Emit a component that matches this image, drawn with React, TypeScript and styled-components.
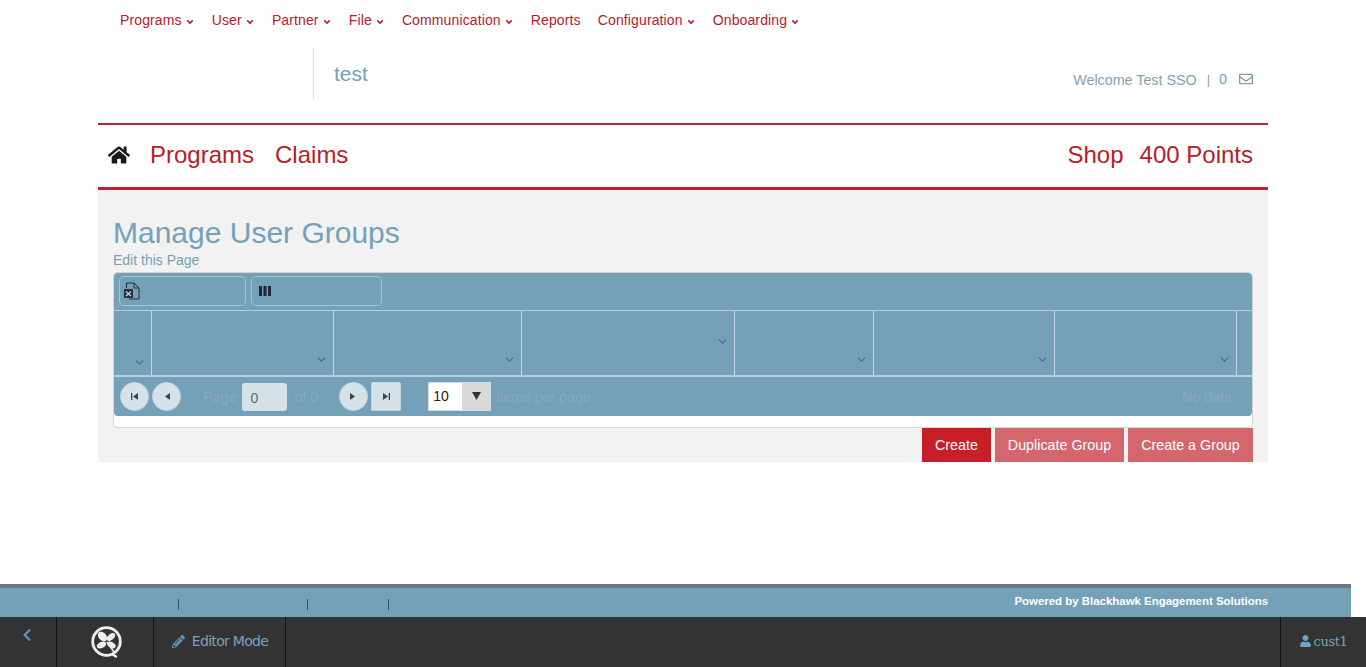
import styled, { createGlobalStyle } from "styled-components";
import { ChevronDown } from "lucide-react";
import {
  FaAngleDown,
  FaChevronLeft,
  FaHome,
  FaPencilAlt,
  FaRegEnvelope,
  FaUser,
} from "react-icons/fa";

const GlobalStyle = createGlobalStyle`
  * {
    box-sizing: border-box;
  }
  html, body {
    margin: 0;
    padding: 0;
    background: #fff;
    font-family: "Liberation Sans", Arial, sans-serif;
  }
`;

const Page = styled.div`
  min-height: 667px;
  height: 667px;
  overflow: hidden;
  display: flex;
  flex-direction: column;
`;

const Container = styled.div`
  width: 1170px;
  margin-left: 98px;
`;

const TopNav = styled.nav`
  height: 40px;
  padding-left: 22px;
  display: flex;
  align-items: center;
  gap: 17.100px;
`;

const TopLink = styled.a`
  display: inline-flex;
  align-items: center;
  gap: 3px;
  font-size: 14px;
  letter-spacing: 0.12px;
  color: #b5202b;
  svg {
    width: 10px;
    height: 10px;
    margin-top: 3px;
  }
`;

const Header = styled.header`
  height: 85px;
  padding-top: 8px;
  display: flex;
  align-items: flex-start;
  justify-content: space-between;
  border-bottom: 2px solid #b52431;
`;

const Brand = styled.div`
  margin-left: 215px;
  width: 300px;
  height: 51px;
  padding: 14px 0 0 20px;
  border-left: 1px solid #dcdcdc;
  font-size: 21px;
  line-height: 24px;
  color: #75a1b8;
`;

const Welcome = styled.div`
  margin-top: 23px;
  padding-right: 15px;
  display: flex;
  align-items: center;
  font-size: 14.300px;
  line-height: 18px;
  color: #839fb6;
`;

const Pipe = styled.span`
  margin: 0 9px 0 10px;
  font-size: 13px;
`;

const Count = styled.span`
  color: #6d9fc0;
  margin-right: 12px;
  position: relative;
  top: -1px;
`;

const EnvelopeIcon = styled(FaRegEnvelope)`
  width: 14px;
  height: 14px;
  color: #7f9cae;
  position: relative;
  top: -1px;
`;

const MainNav = styled.nav`
  height: 65px;
  padding: 0 15px 2px 10px;
  display: flex;
  align-items: center;
  justify-content: space-between;
  border-bottom: 3px solid #c1202c;
`;

const NavGroup = styled.div`
  display: flex;
  align-items: center;
  gap: 21px;
`;

const HomeIcon = styled(FaHome)`
  width: 22px;
  height: 22px;
  color: #1c1c1c;
  margin-right: -1px;
`;

const NavLink = styled.a`
  font-size: 24px;
  line-height: 28px;
  color: #b5202b;
`;

const ShopGroup = styled(NavGroup)`
  gap: 16px;
`;

const Panel = styled.section`
  height: 272px;
  padding: 25px 15px 0;
  background: #f2f2f2;
`;

const Title = styled.h1`
  margin: 0;
  font-size: 30px;
  font-weight: normal;
  line-height: 36px;
  color: #75a1b8;
`;

const EditLink = styled.a`
  display: block;
  margin: -1px 0 2px;
  font-size: 14px;
  line-height: 20px;
  color: #75a1b8;
`;

const Grid = styled.div`
  height: 156px;
  background: #fff;
  border: 1px solid #d5d5d5;
  border-radius: 4px;
`;

const Toolbar = styled.div`
  height: 38px;
  padding: 3px 5px;
  display: flex;
  gap: 5px;
  background: #75a1b8;
  border-bottom: 1px solid #b5cfdc;
  border-radius: 4px 4px 0 0;
`;

const ToolButton = styled.button<{ $width: number; $pad: number }>`
  width: ${(p) => p.$width}px;
  height: 30px;
  padding: 0 0 0 ${(p) => p.$pad}px;
  display: flex;
  align-items: center;
  background: transparent;
  border: 1px solid #a3c3d3;
  border-radius: 5px;
`;

const HeaderRow = styled.div`
  height: 66px;
  display: grid;
  grid-template-columns: 38px 182px 188px 213px 139px 181px 182px 1fr;
  background: #75a1b8;
  border-bottom: 2px solid #b5cfdc;
`;

const HeaderCell = styled.div<{ $raised?: boolean; $low?: boolean }>`
  display: flex;
  justify-content: flex-end;
  align-items: ${(p) => (p.$raised ? "center" : "flex-end")};
  padding: 0 5px ${(p) => (p.$raised ? "4px" : p.$low ? "6px" : "9px")} 0;
  border-right: 1px solid #c3d8e3;
  color: #4a6488;
  svg {
    width: 13px;
    height: 13px;
  }
`;

const HeaderEnd = styled.div`
  background: #75a1b8;
`;

const Pager = styled.div`
  height: 39px;
  padding: 0 20px 0 6px;
  display: flex;
  align-items: center;
  background: #75a1b8;
  border-radius: 0 0 4px 4px;
  font-size: 14.300px;
  color: #8ba9ba;
`;

const PagerButton = styled.button<{ $square?: boolean; $gap?: number }>`
  width: ${(p) => (p.$square ? 30 : 29)}px;
  height: 29px;
  margin-left: ${(p) => p.$gap ?? 0}px;
  padding: 0;
  display: flex;
  align-items: center;
  justify-content: center;
  background: #d6e2e9;
  border: 1px solid #c5d5de;
  border-radius: ${(p) => (p.$square ? "2px" : "50%")};
`;

const PagerText = styled.span<{ $left: number }>`
  margin-left: ${(p) => p.$left}px;
`;

const PageInput = styled.div`
  width: 45px;
  height: 28px;
  margin-left: 6px;
  padding: 2px 0 0 8px;
  line-height: 26px;
  font-size: 14px;
  color: #5f6b72;
  background: #d6e2e9;
  border-radius: 3px;
`;

const SizeSelect = styled.div`
  width: 63px;
  height: 29px;
  margin-left: 27px;
  display: flex;
  background: #fff;
  border: 1px solid #d5dde1;
`;

const SizeValue = styled.span`
  flex: 1;
  padding-left: 4px;
  line-height: 26px;
  font-size: 14px;
  color: #222;
`;

const SizeArrow = styled.span`
  width: 28px;
  display: flex;
  align-items: flex-start;
  justify-content: center;
  padding-top: 9px;
  background: #d9d9d9;
`;

const NoData = styled.span`
  margin-left: auto;
`;

const Actions = styled.div`
  display: flex;
  justify-content: flex-end;
  gap: 4px;
`;

const ActionButton = styled.button<{ $muted?: boolean; $width: number }>`
  width: ${(p) => p.$width}px;
  height: 34px;
  padding: 0;
  border: 0;
  font-family: inherit;
  font-size: 14.300px;
  color: #fff;
  background: ${(p) => (p.$muted ? "#d4666d" : "#c81e28")};
`;

const Footer = styled.footer`
  margin-top: auto;
  width: 1351px;
  height: 33px;
  padding-right: 83px;
  display: flex;
  align-items: center;
  justify-content: space-between;
  background: #75a1b8;
  border-top: 4px solid #687985;
`;

const FooterLinks = styled.div`
  display: flex;
  padding-left: 178px;
`;

const Separator = styled.span<{ $gap?: number }>`
  width: 1px;
  height: 11px;
  margin-top: 3px;
  margin-left: ${(p) => p.$gap ?? 0}px;
  background: #34566c;
`;

const Powered = styled.span`
  font-size: 11.450px;
  font-weight: bold;
  color: #fff;
  position: relative;
  top: -2px;
`;

const AdminBar = styled.div`
  height: 50px;
  display: flex;
  background: #333;
  font-family: "DejaVu Sans", Verdana, sans-serif;
  font-size: 14px;
  color: #7ba3bb;
`;

const AdminCell = styled.div<{ $width: number }>`
  width: ${(p) => p.$width}px;
  display: flex;
  align-items: center;
  justify-content: center;
  border-right: 1px solid #111;
`;

const LogoCell = styled(AdminCell)`
  padding-left: 3px;
`;

const BackCell = styled(AdminCell)`
  align-items: flex-start;
  padding: 11px 2px 0 0;
  color: #5c96bd;
  svg {
    width: 14px;
    height: 14px;
  }
`;

const EditorCell = styled(AdminCell)`
  gap: 7px;
  padding: 0 2px 2px 3px;
  font-size: 14px;
  letter-spacing: -0.700px;
  svg {
    width: 13px;
    height: 13px;
    color: #5c96bd;
  }
`;

const UserCell = styled.div`
  margin-left: auto;
  width: 86px;
  padding-bottom: 2px;
  display: flex;
  align-items: center;
  justify-content: center;
  gap: 3px;
  border-left: 1px solid #111;
  font-family: "DejaVu Serif", Georgia, serif;
  font-size: 13px;
  letter-spacing: -0.400px;
  svg {
    width: 11px;
    height: 12px;
    color: #6fa3c4;
  }
`;

const topLinks = [
  { label: "Programs", menu: true },
  { label: "User", menu: true },
  { label: "Partner", menu: true },
  { label: "File", menu: true },
  { label: "Communication", menu: true },
  { label: "Reports", menu: false },
  { label: "Configuration", menu: true },
  { label: "Onboarding", menu: true },
];

const ExcelIcon = () => (
  <svg width="16" height="18" viewBox="0 0 16 18" fill="none">
    <path d="M2.500 6V1h7.500l5 5v11H5" stroke="#1f2f3a" strokeWidth="1" />
    <path d="M10 1v5h5" stroke="#1f2f3a" strokeWidth="1" />
    <rect x="0" y="7" width="9" height="9" fill="#22333e" />
    <path d="M2 9.500l5 4.500M7 9.500L2 14" stroke="#c9d8e0" strokeWidth="1.300" />
  </svg>
);

const ColumnsIcon = () => (
  <svg width="12" height="12" viewBox="0 0 12 12" fill="#1f2a32">
    <rect x="0" y="1" width="3" height="10" />
    <rect x="4.500" y="1" width="3" height="10" />
    <rect x="9" y="1" width="3" height="10" />
  </svg>
);

const SeekIcon = ({ dir, edge }: { dir: "left" | "right"; edge?: boolean }) => (
  <svg width="9" height="9" viewBox="0 0 9 9" fill="#38474f">
    {dir === "left" ? (
      <>
        <path d="M8 1v7L3 4.500z" />
        {edge && <rect x="1" y="1" width="1.300" height="7" />}
      </>
    ) : (
      <>
        <path d="M1 1v7l5-3.500z" />
        {edge && <rect x="6.700" y="1" width="1.300" height="7" />}
      </>
    )}
  </svg>
);

const DropTriangle = () => (
  <svg width="9" height="8" viewBox="0 0 9 8" fill="#333">
    <path d="M0 0h9L4.500 8z" />
  </svg>
);

const LeafLogo = () => (
  <svg width="34" height="34" viewBox="0 0 34 34">
    <circle cx="16.500" cy="16.500" r="13.800" fill="none" stroke="#eeeeea" strokeWidth="2.800" />
    <path d="M22 29c2 1.500 3.500 2.500 5 3" stroke="#eeeeea" strokeWidth="2.200" fill="none" />
    <g fill="#eeeeea">
      <ellipse cx="12.500" cy="11.500" rx="5.500" ry="3.800" transform="rotate(45 12.500 11.500)" />
      <ellipse cx="21" cy="12" rx="5" ry="3" transform="rotate(-40 21 12)" />
      <ellipse cx="11.500" cy="20" rx="5" ry="3" transform="rotate(-25 11.500 20)" />
      <ellipse cx="21.500" cy="20" rx="4.500" ry="2.800" transform="rotate(30 21.500 20)" />
    </g>
    <path d="M17 17l7 10" stroke="#eeeeea" strokeWidth="1.500" fill="none" />
  </svg>
);

const columns = [false, false, false, true, false, false, false];

const App = () => {
  return (
    <>
      <GlobalStyle />
      <Page>
        <Container>
          <TopNav>
            {topLinks.map((link) => (
              <TopLink key={link.label}>
                {link.label}
                {link.menu && <FaAngleDown />}
              </TopLink>
            ))}
          </TopNav>
          <Header>
            <Brand>test</Brand>
            <Welcome>
              Welcome Test SSO
              <Pipe>|</Pipe>
              <Count>0</Count>
              <EnvelopeIcon />
            </Welcome>
          </Header>
          <MainNav>
            <NavGroup>
              <HomeIcon />
              <NavLink>Programs</NavLink>
              <NavLink>Claims</NavLink>
            </NavGroup>
            <ShopGroup>
              <NavLink>Shop</NavLink>
              <NavLink>400 Points</NavLink>
            </ShopGroup>
          </MainNav>
          <Panel>
            <Title>Manage User Groups</Title>
            <EditLink>Edit this Page</EditLink>
            <Grid>
              <Toolbar>
                <ToolButton $width={127} $pad={4}>
                  <ExcelIcon />
                </ToolButton>
                <ToolButton $width={131} $pad={7}>
                  <ColumnsIcon />
                </ToolButton>
              </Toolbar>
              <HeaderRow>
                {columns.map((raised, i) => (
                  <HeaderCell key={i} $raised={raised} $low={i === 0}>
                    <ChevronDown strokeWidth={2} />
                  </HeaderCell>
                ))}
                <HeaderEnd />
              </HeaderRow>
              <Pager>
                <PagerButton>
                  <SeekIcon dir="left" edge />
                </PagerButton>
                <PagerButton $gap={3}>
                  <SeekIcon dir="left" />
                </PagerButton>
                <PagerText $left={22}>Page</PagerText>
                <PageInput>0</PageInput>
                <PagerText $left={7}>of 0</PagerText>
                <PagerButton $gap={21}>
                  <SeekIcon dir="right" />
                </PagerButton>
                <PagerButton $square $gap={3}>
                  <SeekIcon dir="right" edge />
                </PagerButton>
                <SizeSelect>
                  <SizeValue>10</SizeValue>
                  <SizeArrow>
                    <DropTriangle />
                  </SizeArrow>
                </SizeSelect>
                <PagerText $left={5}>items per page</PagerText>
                <NoData>No data</NoData>
              </Pager>
            </Grid>
            <Actions>
              <ActionButton $width={69}>Create</ActionButton>
              <ActionButton $muted $width={129}>Duplicate Group</ActionButton>
              <ActionButton $muted $width={125}>Create a Group</ActionButton>
            </Actions>
          </Panel>
        </Container>
        <Footer>
          <FooterLinks>
            <Separator />
            <Separator $gap={128} />
            <Separator $gap={80} />
          </FooterLinks>
          <Powered>Powered by Blackhawk Engagement Solutions</Powered>
        </Footer>
        <AdminBar>
          <BackCell $width={57}>
            <FaChevronLeft />
          </BackCell>
          <LogoCell $width={97}>
            <LeafLogo />
          </LogoCell>
          <EditorCell $width={132}>
            <FaPencilAlt />
            Editor Mode
          </EditorCell>
          <UserCell>
            <FaUser />
            cust1
          </UserCell>
        </AdminBar>
      </Page>
    </>
  );
};

export default App;
